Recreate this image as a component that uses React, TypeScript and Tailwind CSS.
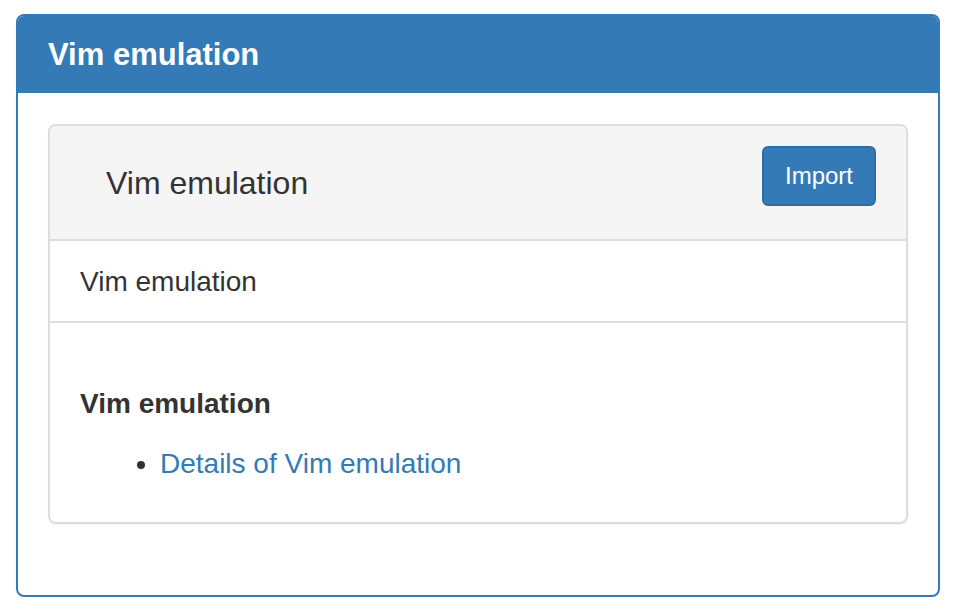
export default function App() {
	return (
		<div className="min-h-screen bg-white pt-[14px] px-4 font-['Liberation_Sans',Arial,sans-serif] text-[#333]">
			<div className="border-2 border-[#337ab7] rounded-[8px] overflow-hidden">
				<div className="bg-[#337ab7] h-[77px] px-[30px] flex items-center">
					<h3 className="text-white font-bold text-[31px] leading-none">Vim emulation</h3>
				</div>
				<div className="px-[30px] pt-[31px] pb-[71px]">
					<div className="border-2 border-[#ddd] rounded-[8px] overflow-hidden shadow-[0_1px_2px_rgba(0,0,0,0.05)]">
						<div className="bg-[#f5f5f5] h-[115px] border-b-2 border-[#ddd] flex items-center justify-between pl-[56px] pr-[30px]">
							<span className="text-[32px] leading-none">Vim emulation</span>
							<button className="w-[114px] h-[60px] bg-[#337ab7] border-2 border-[#2e6da4] rounded-[6px] text-white text-[24px] mt-[-14px]">
								Import
							</button>
						</div>
						<div className="h-[82px] border-b-2 border-[#ddd] px-[30px] flex items-center">
							<span className="text-[28px] mt-[2px]">Vim emulation</span>
						</div>
						<div className="px-[30px] pt-[61px] pb-[38px]">
							<h4 className="font-bold text-[28px] leading-[40px]">Vim emulation</h4>
							<ul className="list-disc pl-[80px] mt-[20px]">
								<li className="text-[28px] leading-[40px]">
									<a href="#" className="text-[#337ab7]">
										Details of Vim emulation
									</a>
								</li>
							</ul>
						</div>
					</div>
				</div>
			</div>
		</div>
	);
}
